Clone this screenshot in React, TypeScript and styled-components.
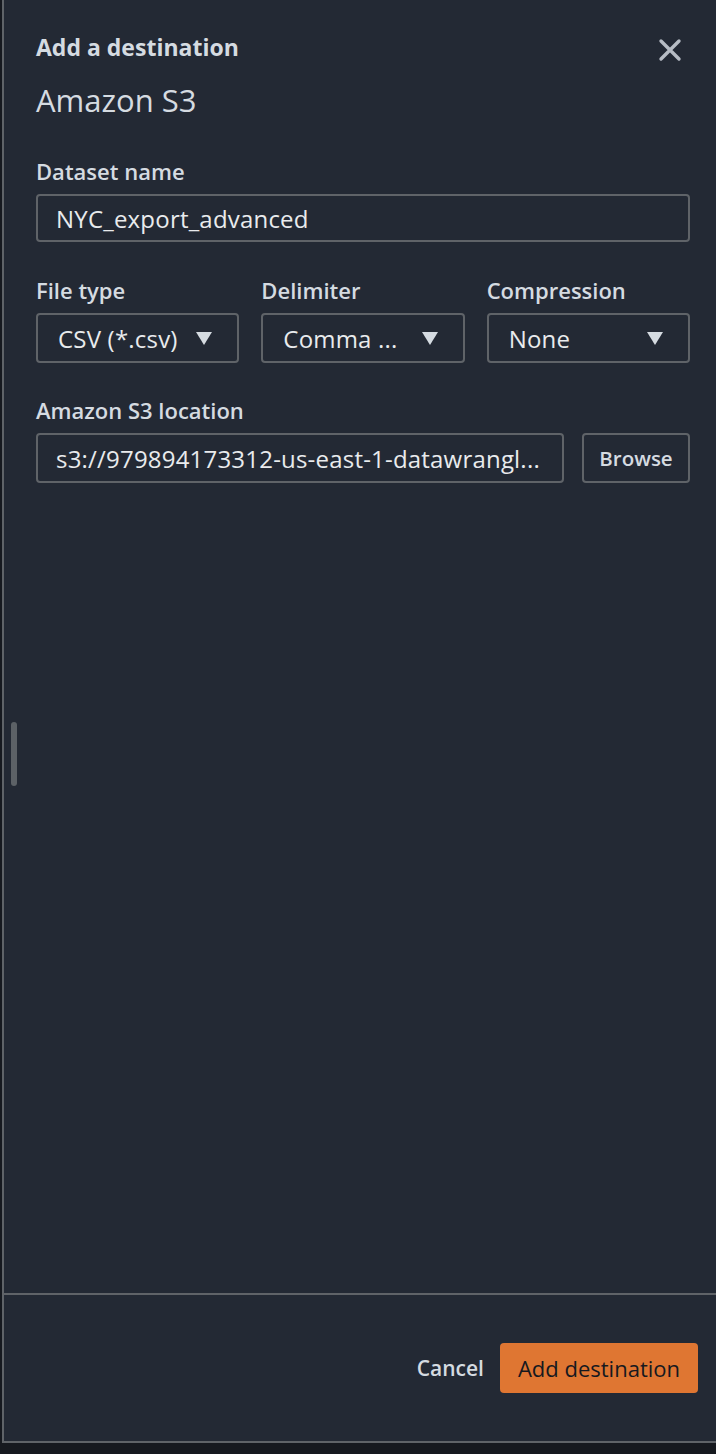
import React, { FC } from 'react';
import styled, { createGlobalStyle } from 'styled-components';

const GlobalStyle = createGlobalStyle`
  html, body {
    margin: 0;
    padding: 0;
    background: #16191f;
  }
  body {
    font-family: 'Open Sans', 'Liberation Sans', sans-serif;
  }
`;

const Page = styled.div`
  width: 716px;
  height: 1454px;
  background: #16191f;
`;

const Panel = styled.div`
  position: relative;
  height: 1443px;
  margin-left: 2px;
  border-left: 2px solid #5f6368;
  border-bottom: 2px solid #5f6368;
  background: #232934;
  display: flex;
  flex-direction: column;
  box-sizing: border-box;
`;

const Body = styled.div`
  flex: 1;
  padding: 30px 26px 0 32px;
`;

const HeaderRow = styled.div`
  display: flex;
  justify-content: space-between;
  align-items: flex-start;
`;

const Titles = styled.div`
  display: flex;
  flex-direction: column;
`;

const Kicker = styled.div`
  color: #d5dbe1;
  font-size: 23px;
  font-weight: 700;
  line-height: 34px;
`;

const Title = styled.h1`
  margin: 17px 0 0;
  color: #d5dbe1;
  font-size: 31px;
  font-weight: 400;
  line-height: 38px;
`;

const CloseButton = styled.button`
  background: none;
  border: none;
  padding: 0;
  margin: 8px 8px 0 0;
  width: 24px;
  height: 24px;
  display: flex;
  cursor: pointer;
`;

const Field = styled.div<{ $gap?: number }>`
  margin-top: ${(p) => p.$gap ?? 0}px;
  display: flex;
  flex-direction: column;
`;

const Label = styled.label`
  color: #d5dbe1;
  font-size: 22px;
  font-weight: 600;
  line-height: 28px;
  margin-bottom: 9px;
`;

const Row = styled.div`
  display: grid;
  grid-template-columns: repeat(3, 1fr);
  column-gap: 22px;
  margin-top: 34px;
`;

const Box = styled.div<{ $pad?: number; $h?: number }>`
  height: ${(p) => p.$h ?? 50}px;
  box-sizing: border-box;
  border: 2px solid #5f6368;
  border-radius: 4px;
  display: flex;
  align-items: center;
  padding: 0 ${(p) => p.$pad ?? 16}px;
  color: #e9ebed;
  font-size: 24px;
  letter-spacing: 0.2px;
  white-space: nowrap;
  overflow: hidden;
`;

const SelectBox = styled(Box)`
  justify-content: space-between;
  padding-right: 24px;
`;

const Value = styled.span`
  overflow: hidden;
`;

const LocationRow = styled.div`
  display: flex;
  gap: 18px;
`;

const LocationInput = styled(Box)`
  flex: 1;
  min-width: 0;
`;

const BrowseButton = styled.button`
  width: 108px;
  height: 50px;
  box-sizing: border-box;
  border: 2px solid #5f6368;
  border-radius: 4px;
  background: transparent;
  color: #d5dbe1;
  font-family: inherit;
  font-size: 20.5px;
  font-weight: 600;
  padding: 0;
`;

const Footer = styled.div`
  height: 148px;
  border-top: 2px solid #5f6368;
  box-sizing: border-box;
  display: flex;
  justify-content: flex-end;
  align-items: center;
  gap: 16px;
  padding-right: 18px;
`;

const LinkButton = styled.button`
  background: none;
  border: none;
  color: #d5dbe1;
  font-family: inherit;
  font-size: 21px;
  font-weight: 600;
  padding: 0;
`;

const PrimaryButton = styled.button`
  height: 50px;
  padding: 0 18px;
  border: none;
  border-radius: 4px;
  background: #df7632;
  color: #16191f;
  font-family: inherit;
  font-size: 22px;
  font-weight: 500;
`;

const ScrollThumb = styled.div`
  position: absolute;
  left: 7px;
  top: 722px;
  width: 6px;
  height: 64px;
  border-radius: 3px;
  background: #5c6166;
`;

const Caret: FC = () => (
  <svg width="18" height="15" viewBox="0 0 18 15">
    <path d="M1 1h16L9 14z" fill="#d5dbe1" />
  </svg>
);

const CloseIcon: FC = () => (
  <svg width="24" height="24" viewBox="0 0 24 24">
    <path d="M3 3l18 18M21 3L3 21" stroke="#b7bdc5" strokeWidth="3.4" strokeLinecap="round" />
  </svg>
);

const Select: FC<{ value: string }> = ({ value }) => (
  <SelectBox $pad={20}>
    <Value>{value}</Value>
    <Caret />
  </SelectBox>
);

const App: FC = () => (
  <Page>
    <GlobalStyle />
    <Panel>
      <ScrollThumb />
      <Body>
        <HeaderRow>
          <Titles>
            <Kicker>Add a destination</Kicker>
            <Title>Amazon S3</Title>
          </Titles>
          <CloseButton aria-label="Close">
            <CloseIcon />
          </CloseButton>
        </HeaderRow>

        <Field $gap={38}>
          <Label>Dataset name</Label>
          <Box $pad={18} $h={48}>NYC_export_advanced</Box>
        </Field>

        <Row>
          <Field>
            <Label>File type</Label>
            <Select value="CSV (*.csv)" />
          </Field>
          <Field>
            <Label>Delimiter</Label>
            <Select value="Comma ..." />
          </Field>
          <Field>
            <Label>Compression</Label>
            <Select value="None" />
          </Field>
        </Row>

        <Field $gap={33}>
          <Label>Amazon S3 location</Label>
          <LocationRow>
            <LocationInput $pad={18}>
              <Value>s3://979894173312-us-east-1-datawrangl...</Value>
            </LocationInput>
            <BrowseButton>Browse</BrowseButton>
          </LocationRow>
        </Field>
      </Body>
      <Footer>
        <LinkButton>Cancel</LinkButton>
        <PrimaryButton>Add destination</PrimaryButton>
      </Footer>
    </Panel>
  </Page>
);

export default App;
